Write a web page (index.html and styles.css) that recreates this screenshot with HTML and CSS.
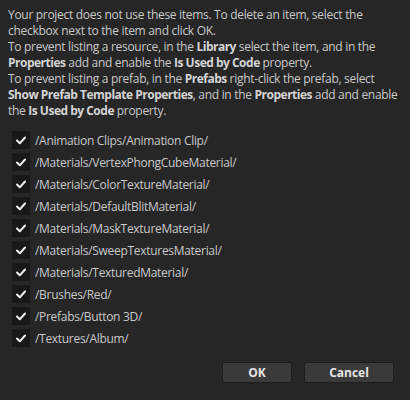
FILE: index.html
```html
<!DOCTYPE html>
<html>
<head>
<meta charset="utf-8">
<link rel="stylesheet" href="styles.css">
</head>
<body>
<div class="dialog">
  <div class="intro">
    <p>Your project does not use these items. To delete an item, select the<br>checkbox next to the item and click OK.</p>
    <p>To prevent listing a resource, in the <b>Library</b> select the item, and in the<br><b>Properties</b> add and enable the <b>Is Used by Code</b> property.</p>
    <p>To prevent listing a prefab, in the <b>Prefabs</b> right-click the prefab, select<br><b>Show Prefab Template Properties</b>, and in the <b>Properties</b> add and enable<br>the <b>Is Used by Code</b> property.</p>
  </div>
  <ul class="items">
    <li><span class="box"><svg viewBox="0 0 18 18"><path d="M5 9.5 L7.8 12.3 L13 6.5" /></svg></span><span>/Animation Clips/Animation Clip/</span></li>
    <li><span class="box"><svg viewBox="0 0 18 18"><path d="M5 9.5 L7.8 12.3 L13 6.5" /></svg></span><span>/Materials/VertexPhongCubeMaterial/</span></li>
    <li><span class="box"><svg viewBox="0 0 18 18"><path d="M5 9.5 L7.8 12.3 L13 6.5" /></svg></span><span>/Materials/ColorTextureMaterial/</span></li>
    <li><span class="box"><svg viewBox="0 0 18 18"><path d="M5 9.5 L7.8 12.3 L13 6.5" /></svg></span><span>/Materials/DefaultBlitMaterial/</span></li>
    <li><span class="box"><svg viewBox="0 0 18 18"><path d="M5 9.5 L7.8 12.3 L13 6.5" /></svg></span><span>/Materials/MaskTextureMaterial/</span></li>
    <li><span class="box"><svg viewBox="0 0 18 18"><path d="M5 9.5 L7.8 12.3 L13 6.5" /></svg></span><span>/Materials/SweepTexturesMaterial/</span></li>
    <li><span class="box"><svg viewBox="0 0 18 18"><path d="M5 9.5 L7.8 12.3 L13 6.5" /></svg></span><span>/Materials/TexturedMaterial/</span></li>
    <li><span class="box"><svg viewBox="0 0 18 18"><path d="M5 9.5 L7.8 12.3 L13 6.5" /></svg></span><span>/Brushes/Red/</span></li>
    <li><span class="box"><svg viewBox="0 0 18 18"><path d="M5 9.5 L7.8 12.3 L13 6.5" /></svg></span><span>/Prefabs/Button 3D/</span></li>
    <li><span class="box"><svg viewBox="0 0 18 18"><path d="M5 9.5 L7.8 12.3 L13 6.5" /></svg></span><span>/Textures/Album/</span></li>
  </ul>
  <div class="buttons">
    <button class="btn ok">OK</button>
    <button class="btn cancel">Cancel</button>
  </div>
</div>
</body>
</html>
```
FILE: styles.css
```css
html, body {
  margin: 0;
  padding: 0;
  background: #262626;
  width: 410px;
  height: 400px;
  overflow: hidden;
}
.dialog {
  font-family: "Open Sans", "Noto Sans", sans-serif;
  font-size: 12px;
  letter-spacing: -0.3px;
  color: #c9c9c9;
  padding: 7px 8px 0 8px;
}
.intro p {
  margin: 0;
  line-height: 16px;
  white-space: nowrap;
}
.intro b {
  font-weight: 700;
  letter-spacing: -0.5px;
  color: #d4d4d4;
}
.items {
  list-style: none;
  margin: 12px 0 0 0;
  padding: 0 0 0 4px;
  display: flex;
  flex-direction: column;
  gap: 4px;
}
.items li {
  display: flex;
  align-items: center;
  gap: 5px;
  height: 18px;
}
.box {
  width: 18px;
  height: 18px;
  background: #181818;
  display: flex;
}
.box svg {
  width: 18px;
  height: 18px;
}
.box path {
  fill: none;
  stroke: #f0f0f0;
  stroke-width: 2;
  stroke-linecap: round;
  stroke-linejoin: round;
}
.buttons {
  display: flex;
  justify-content: flex-end;
  gap: 12px;
  margin-top: 15px;
  padding-right: 8px;
}
.btn {
  height: 21px;
  background: #3a3a3a;
  border: 1px solid #1c1c1c;
  border-radius: 2px;
  color: #e6e6e6;
  font-family: "Open Sans", "Noto Sans", sans-serif;
  font-size: 12px;
  font-weight: 700;
  padding: 0;
}
.ok { width: 70px; }
.cancel { width: 90px; }
```
